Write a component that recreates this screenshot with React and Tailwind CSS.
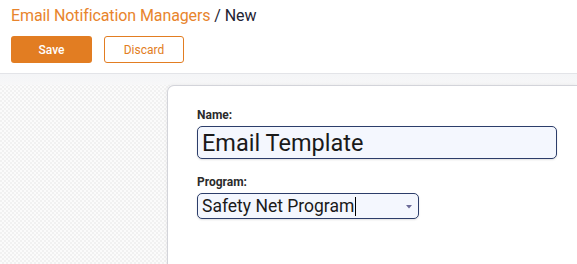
export default function App() {
  return (
    <div className="w-[577px] h-[264px] overflow-hidden bg-white flex flex-col font-['Roboto',sans-serif]">
      <div className="px-[11px] pt-[6px] border-b border-[#e3e4e8] h-[74px] shrink-0">
        <div className="text-[16px] leading-[20px] tracking-[-0.1px]">
          <span className="text-[#e8842c]">Email Notification Managers</span>
          <span className="text-[#1f2433]"> / New</span>
        </div>
        <div className="flex gap-[12px] mt-[10px]">
          <button className="w-[81px] h-[27px] rounded-[3px] bg-[#e27d22] text-white text-[12px] font-medium">
            Save
          </button>
          <button className="w-[80px] h-[27px] rounded-[3px] border border-[#e27d22] bg-white text-[#e27d22] text-[12px]">
            Discard
          </button>
        </div>
      </div>
      <div className="flex-1 flex flex-col bg-[image:repeating-conic-gradient(#f1f1f1_0_25%,#fbfbfb_0_50%)] bg-[length:4px_4px]">
        <div className="h-[11px] bg-gradient-to-b from-[#f4f5f7] to-[#f7f7f8] shrink-0" />
        <div className="flex-1 ml-[167px] bg-white border-l border-t border-[#d3d4da] rounded-tl-[7px] shadow-[-1px_-1px_3px_rgba(0,0,0,0.04)] pl-[29px] pt-[22px]">
          <div className="text-[12px] leading-[14px] font-bold text-[#2b2b2b]">Name:</div>
          <div className="mt-[4px] w-[360px] h-[33px] rounded-[5px] border border-[#2c3d6a] bg-[#f4f7fe] flex items-center pl-[4px] shadow-[0_1px_2px_rgba(0,0,0,0.12)]">
            <span className="text-[23.5px] leading-[28px] text-[#1a1a1a]">Email Template</span>
          </div>
          <div className="mt-[16px] text-[12px] leading-[14px] font-bold text-[#2b2b2b]">Program:</div>
          <div className="mt-[4px] w-[222px] h-[26px] rounded-[5px] border border-[#2c3d6a] bg-[#f4f7fe] flex items-center pl-[4px] pr-[6px] shadow-[0_1px_2px_rgba(0,0,0,0.12)]">
            <span className="text-[17.5px] leading-[22px] text-[#1a1a1a]">Safety Net Program</span>
            <span className="w-px h-[19px] bg-black ml-[1px]" />
            <span className="flex-1" />
            <svg width="6" height="4" viewBox="0 0 6 4" className="mt-[1px]">
              <path d="M0 0h6L3 3.5z" fill="#6b6a98" />
            </svg>
          </div>
        </div>
      </div>
    </div>
  );
}
